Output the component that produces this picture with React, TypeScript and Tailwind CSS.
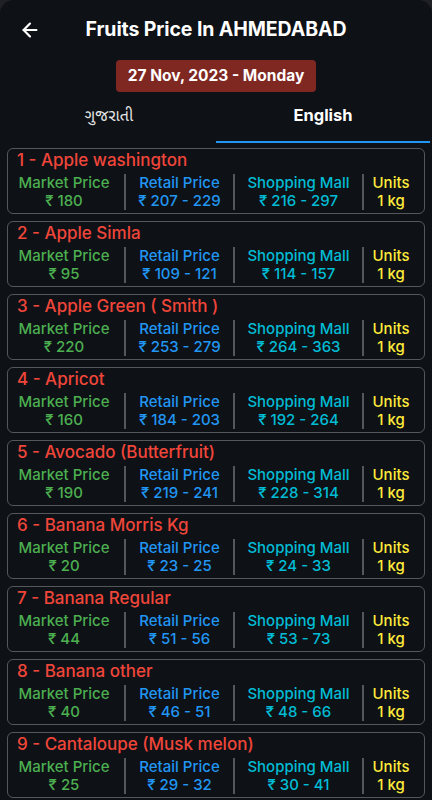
import { ArrowLeft } from "lucide-react";

const fruits = [
  { name: "Apple washington", market: "180", retail: "207 - 229", mall: "216 - 297" },
  { name: "Apple Simla", market: "95", retail: "109 - 121", mall: "114 - 157" },
  { name: "Apple Green ( Smith )", market: "220", retail: "253 - 279", mall: "264 - 363" },
  { name: "Apricot", market: "160", retail: "184 - 203", mall: "192 - 264" },
  { name: "Avocado (Butterfruit)", market: "190", retail: "219 - 241", mall: "228 - 314" },
  { name: "Banana Morris Kg", market: "20", retail: "23 - 25", mall: "24 - 33" },
  { name: "Banana Regular", market: "44", retail: "51 - 56", mall: "53 - 73" },
  { name: "Banana other", market: "40", retail: "46 - 51", mall: "48 - 66" },
  { name: "Cantaloupe (Musk melon)", market: "25", retail: "29 - 32", mall: "30 - 41" },
];

const App = () => {
  return (
    <div className="h-[800px] overflow-hidden bg-[#1e2024] font-['Inter','Noto_Sans','Noto_Sans_Gujarati',sans-serif]">
      <div className="h-[800px] rounded-t-[14px] bg-[#0e1116] text-white">
        <div className="flex items-center h-[60px] px-[19px]">
          <ArrowLeft className="w-[22px] h-[22px]" strokeWidth={2.4} />
          <h1 className="flex-1 text-center text-[19.5px] font-bold pr-[22px] tracking-[-0.1px]">
            Fruits Price In AHMEDABAD
          </h1>
        </div>
        <div className="flex justify-center">
          <div className="bg-[#7f2822] rounded-[4px] px-[12px] h-[32px] flex items-center text-[15.5px] font-bold">
            27 Nov, 2023 - Monday
          </div>
        </div>
        <div className="grid grid-cols-2 px-[2px]">
          <div className="h-[51px] pt-[13px] leading-[20px] text-center text-[16px] text-[#e6e6e6]">
            ગુજરાતી
          </div>
          <div className="h-[51px] pt-[13px] leading-[20px] text-center text-[16.5px] font-bold border-b-[2px] border-[#2196f3]">
            English
          </div>
        </div>
        <div className="flex flex-col gap-[7px] px-[7px] pt-[5px]">
          {fruits.map((f, i) => (
            <div
              key={f.name}
              className="border-[1.5px] border-[#55575b] rounded-[6px] h-[66px] px-[9px]"
            >
              <div className="text-[#f0463a] text-[17px] font-medium leading-[23px]">
                {i + 1} - {f.name}
              </div>
              <div className="grid grid-cols-[107px_109px_129px_1fr] mt-[2px] text-[15px] font-medium leading-[18px]">
                <div className="text-center text-[#4caf50] pr-[13px]">
                  <div>Market Price</div>
                  <div>₹ {f.market}</div>
                </div>
                <div className="text-center text-[#2196f3] border-l-[2px] border-[#55575b]">
                  <div>Retail Price</div>
                  <div>₹ {f.retail}</div>
                </div>
                <div className="text-center text-[#00bcd4] border-l-[2px] border-[#55575b]">
                  <div>Shopping Mall</div>
                  <div>₹ {f.mall}</div>
                </div>
                <div className="text-center text-[#ffeb3b] border-l-[2px] border-[#55575b] pl-[3px]">
                  <div>Units</div>
                  <div>1 kg</div>
                </div>
              </div>
            </div>
          ))}
        </div>
      </div>
    </div>
  );
};

export default App;
